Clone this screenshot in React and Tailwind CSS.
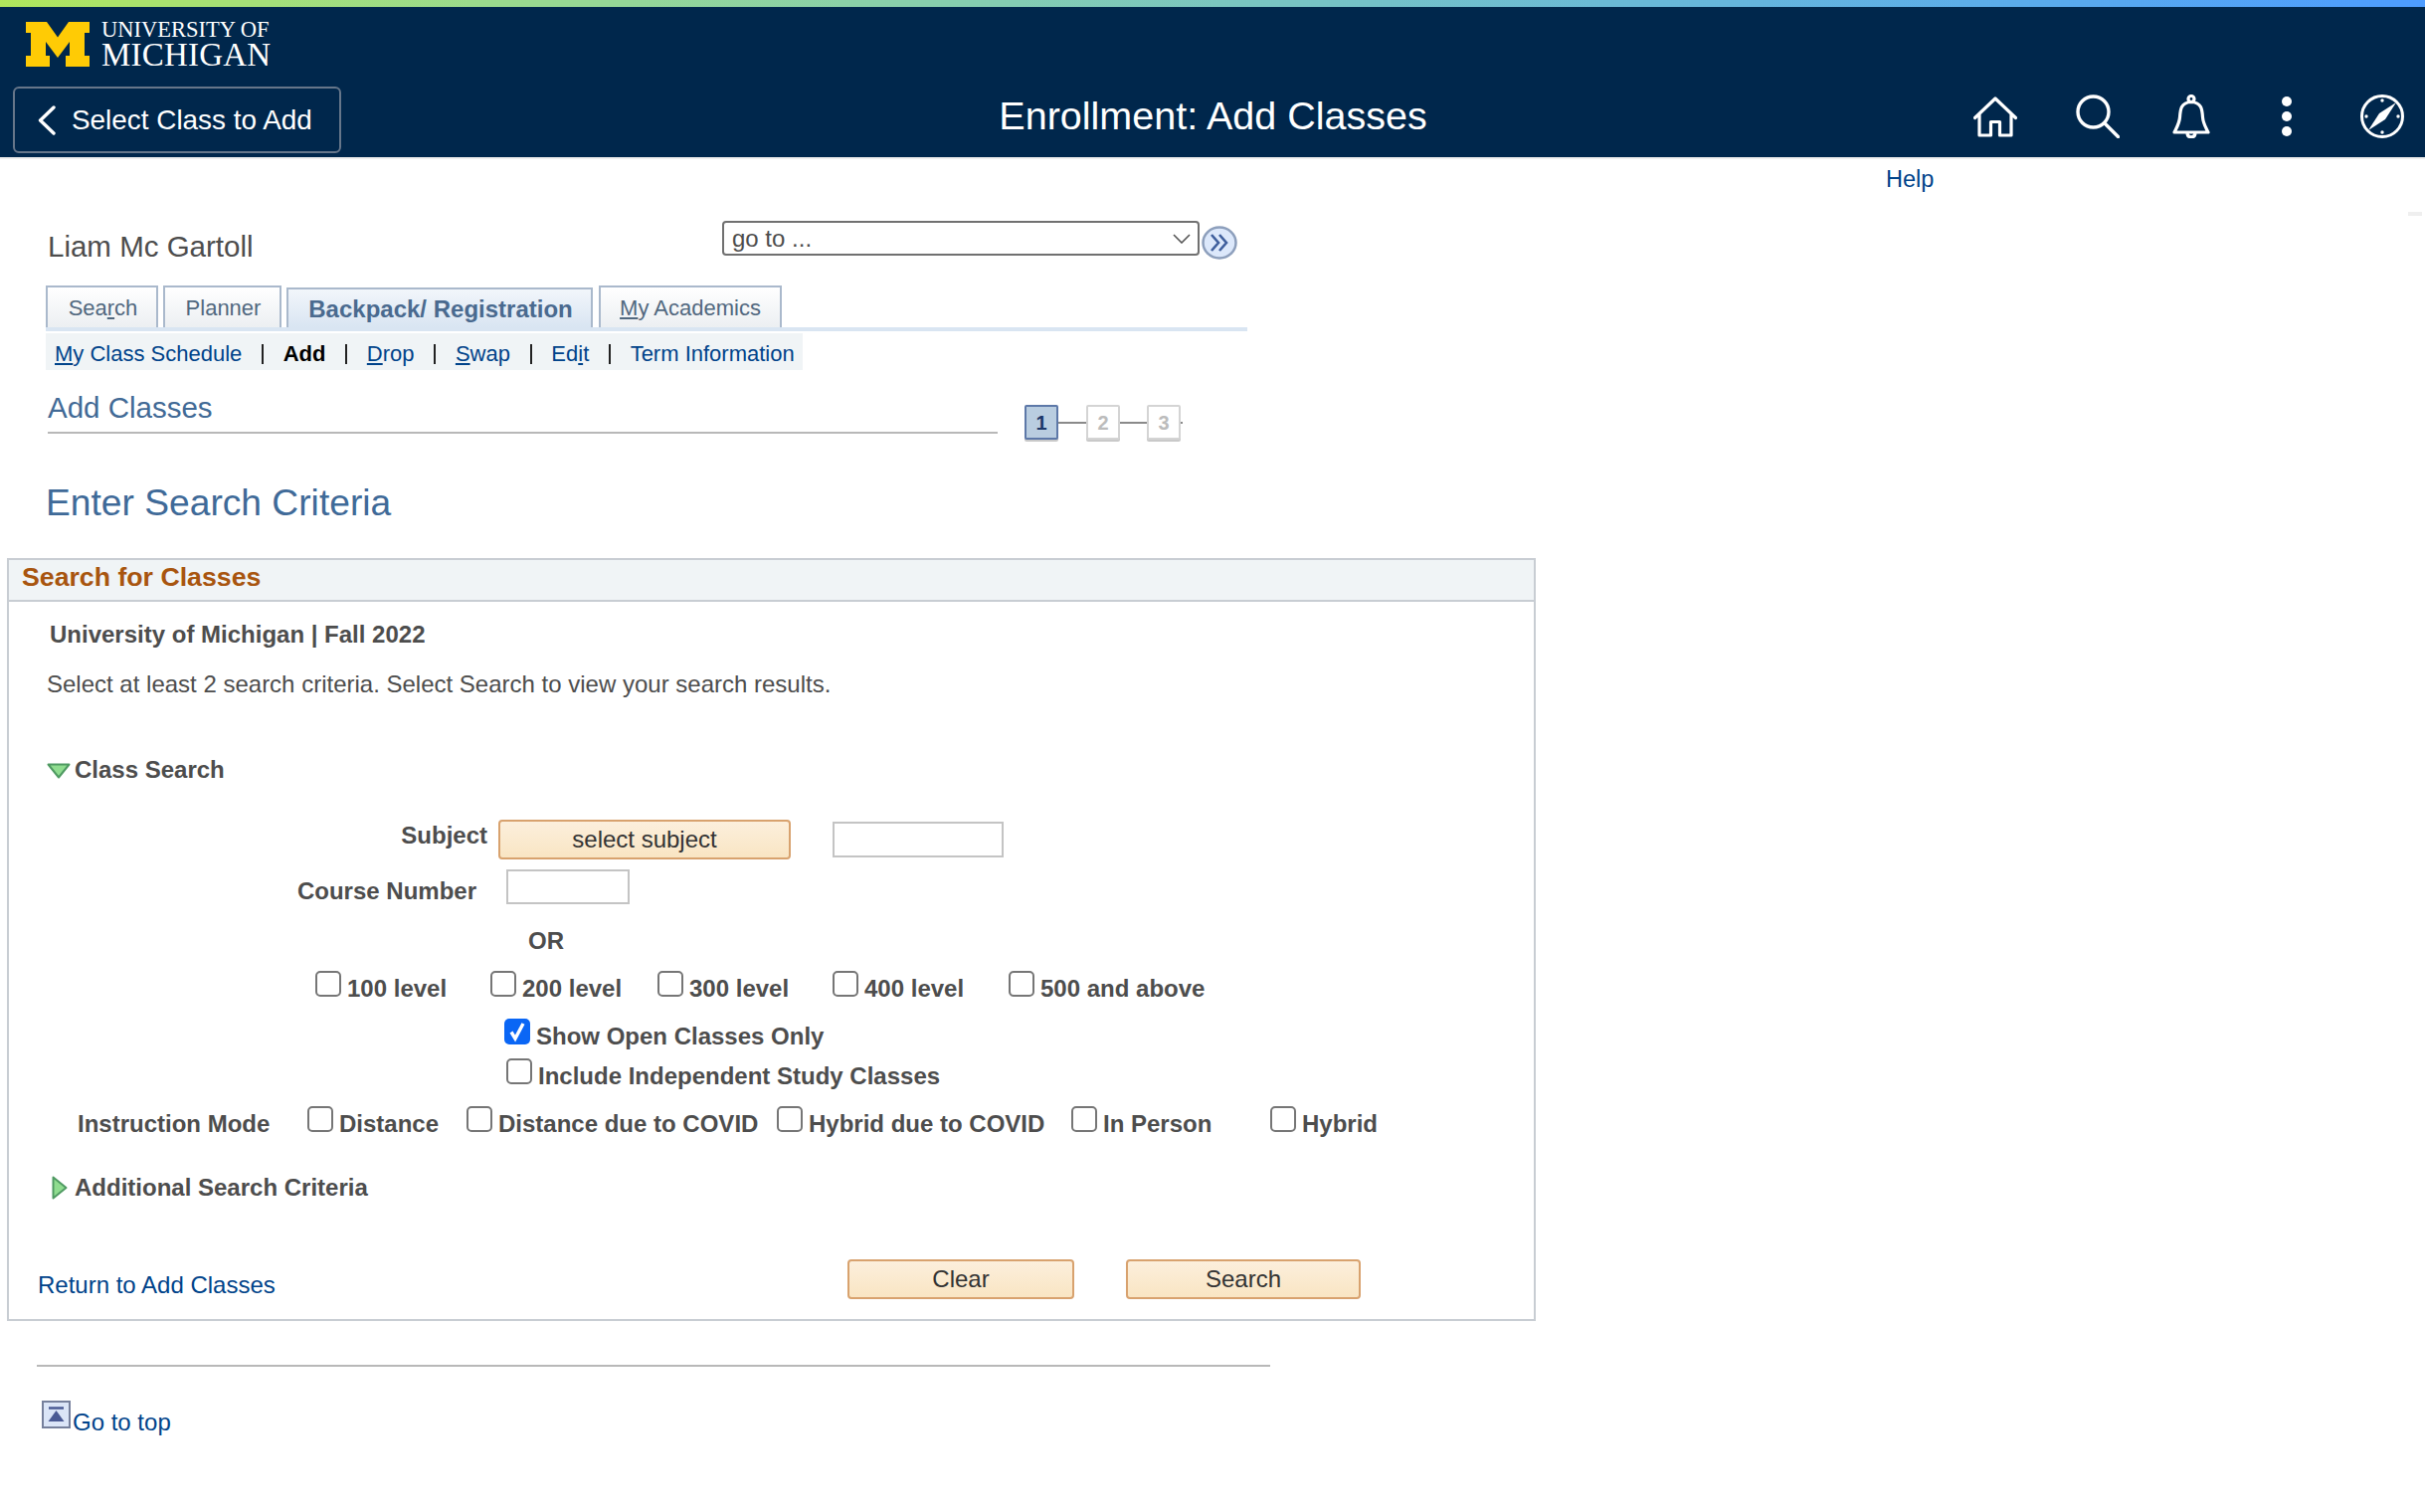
import React from 'react';

const CheckItem = ({ label, checked, className }) => (
    <label className={`flex items-start ${className || ''}`}>
        {checked ? (
            <span className="flex h-[26px] w-[26px] shrink-0 items-center justify-center rounded-[5px] bg-[#0a66f5]">
                <svg viewBox="0 0 26 26" className="h-[26px] w-[26px]" fill="none" stroke="#fff" strokeWidth="3.4">
                    <path d="M7 13.5l4 6.5 8-15" />
                </svg>
            </span>
        ) : (
            <span className="block h-[26px] w-[26px] shrink-0 rounded-[5px] border-2 border-[#767676] bg-white" />
        )}
        <span className="ml-[6px] mt-[3px] whitespace-nowrap text-[24px] font-bold leading-[30px] text-[#4d4d4d]">{label}</span>
    </label>
);

const OrangeButton = ({ children, className }) => (
    <button className={`h-[40px] rounded-[4px] border-2 border-[#d8a26e] bg-gradient-to-b from-[#fcefdc] to-[#f9e5c3] text-[24px] leading-none text-[#333] ${className}`}>
        {children}
    </button>
);

const StepBox = ({ n, active }) => (
    <div className={`flex h-[35px] w-[34px] items-center justify-center rounded-[2px] border-2 text-[20px] font-bold leading-none shadow-[0_2px_0_#c9c9c9] ${active ? 'border-[#5d78a8] bg-[#b9cde0] text-[#1c3768]' : 'border-[#d4d4d4] bg-white text-[#bcbcbc]'}`}>
        {n}
    </div>
);

const Logo = () => (
    <div className="flex items-start">
        <svg viewBox="0 0 64 45" className="h-[45px] w-[64px]">
            <path fill="#ffcb05" d="M0 0h21l11 15.5L43 0h21v11h-5v23h5v11H40V34h4V20L32 36 20 20v14h4v11H0V34h5V11H0z" />
        </svg>
        <div className="ml-[12px] font-['Liberation_Serif',serif] text-white">
            <div className="-mt-[2px] text-[22.5px] leading-[19px]">UNIVERSITY OF</div>
            <div className="mt-[3px] text-[33px] leading-[26px] tracking-[0.2px]">MICHIGAN</div>
        </div>
    </div>
);

const HeaderIcons = () => (
    <div className="flex items-center pr-[21px]">
        <svg viewBox="0 0 44 41" className="h-[41px] w-[44px]" fill="none" stroke="#fff" strokeWidth="3.2" strokeLinecap="round" strokeLinejoin="round">
            <path d="M1.5 21.5L22 2l20.5 19.5M6 18v21h11.5V25.5h9V39H38V18" />
        </svg>
        <svg viewBox="0 0 44 44" className="ml-[59px] h-[44px] w-[44px]" fill="none" stroke="#fff" strokeWidth="3.4" strokeLinecap="round">
            <circle cx="17.5" cy="17.5" r="15.5" />
            <path d="M29 29l13.5 13.5" />
        </svg>
        <svg viewBox="0 0 38 44" className="ml-[53px] h-[44px] w-[38px]" fill="none" stroke="#fff" strokeWidth="3.2" strokeLinejoin="round">
            <circle cx="19" cy="4.5" r="3" />
            <path d="M2 38c3-6 5-9 5.5-15 .5-8 1-15 11.5-15.500C29.500 8 30 15 30.500 23c.5 6 2.500 9 5.500 15z" />
            <path d="M15 39c.5 5 7.500 5 8 0" />
        </svg>
        <div className="ml-[72px] flex flex-col gap-[5px]">
            <div className="h-[10px] w-[10px] rounded-full bg-white" />
            <div className="h-[10px] w-[10px] rounded-full bg-white" />
            <div className="h-[10px] w-[10px] rounded-full bg-white" />
        </div>
        <svg viewBox="0 0 44 44" className="ml-[69px] h-[44px] w-[44px]" fill="none" stroke="#fff" strokeWidth="3">
            <circle cx="22" cy="22" r="20.500" />
            <path fill="#fff" stroke="none" d="M36 8L25 25 8 36l11-17z" />
            <circle cx="22" cy="6" r="1.700" fill="#fff" stroke="none" />
            <circle cx="22" cy="38" r="1.700" fill="#fff" stroke="none" />
            <circle cx="6" cy="22" r="1.700" fill="#fff" stroke="none" />
            <circle cx="38" cy="22" r="1.700" fill="#fff" stroke="none" />
        </svg>
    </div>
);

const App = () => {
    return (
        <div className="h-[1520px] w-[2438px] overflow-hidden bg-white font-['Liberation_Sans',Arial,sans-serif]">
            <div className="h-[7px] bg-gradient-to-r from-[#b0e75c] to-[#4d9cff]" />
            <header className="h-[151px] bg-[#00274c] pt-[15px]">
                <div className="pl-[26px]"><Logo /></div>
                <div className="mt-[19px] grid grid-cols-3 items-center pl-[13px]">
                    <button className="flex h-[67px] w-[330px] items-center rounded-[6px] border-2 border-[#66768a] pl-[23px] text-[27.9px] leading-none text-white">
                        <svg viewBox="0 0 18 30" className="h-[30px] w-[18px]" fill="none" stroke="#fff" strokeWidth="3.4" strokeLinecap="round" strokeLinejoin="round">
                            <path d="M16 2L2.500 15 16 28" />
                        </svg>
                        <span className="ml-[16px]">Select Class to Add</span>
                    </button>
                    <h1 className="-ml-[12px] -mt-[8px] text-center text-[39.500px] font-normal leading-none text-white">Enrollment: Add Classes</h1>
                    <div className="flex justify-end -mt-[7px]"><HeaderIcons /></div>
                </div>
            </header>
            <div className="h-[2px] bg-[#eeeeee]" />

            <div className="flex h-[42px] items-center pl-[1896px]">
                <a className="text-[23.5px] leading-none text-[#00438a]">Help</a>
            </div>

            <div className="flex h-[60px] items-start pl-[48px] pr-[3px] pt-[20px]">
                <div className="mt-[9px] w-[678px] text-[29.5px] leading-[34px] text-[#4d4d4d]">Liam Mc Gartoll</div>
                <div className="flex h-[35px] w-[480px] items-center justify-between rounded-[4px] border-2 border-[#707070] pl-[8px] pr-[7px] text-[24px] leading-none text-[#4d4d4d]">
                    <span>go to ...</span>
                    <svg viewBox="0 0 18 10" className="h-[10px] w-[18px]" fill="none" stroke="#555" strokeWidth="1.6">
                        <path d="M1 1l8 8 8-8" />
                    </svg>
                </div>
                <svg viewBox="0 0 36 34" className="ml-[2px] mt-[5px] h-[34px] w-[36px]" fill="none">
                    <ellipse cx="18" cy="17" rx="16.500" ry="15.500" fill="#dce8fb" stroke="#8d9fbc" strokeWidth="2.500" />
                    <path d="M10 9l7 8-7 8M18 9l7 8-7 8" stroke="#3f5f9d" strokeWidth="2.600" />
                </svg>
                <div className="ml-auto -mt-[9px] h-[4px] w-[14px] bg-[#efefef]" />
            </div>

            <div className="ml-[46px] mt-[25px] flex h-[46px] w-[1208px] items-end border-b-4 border-[#d9e5f2] text-[22px] leading-none text-[#51687f]">
                <div className="flex h-[42px] w-[113px] items-center justify-center border-2 border-b-0 border-[#aab9cc] bg-gradient-to-b from-white to-[#eceff2] pl-[2px] pt-[2px]">Sea<u>r</u>ch</div>
                <div className="ml-[5px] flex h-[42px] w-[119px] items-center justify-center border-2 border-b-0 border-[#aab9cc] bg-gradient-to-b from-white to-[#eceff2] pl-[2px] pt-[2px]">Planner</div>
                <div className="ml-[5px] flex h-[40px] w-[308px] items-center justify-center border-2 border-b-0 border-[#aab9cc] bg-gradient-to-b from-[#f2f6fb] to-[#d9e5f2] pl-[2px] pt-[2px] text-[24px] font-bold text-[#4a6a8f]">Backpack/ Registration</div>
                <div className="ml-[6px] flex h-[42px] w-[184px] items-center justify-center border-2 border-b-0 border-[#aab9cc] bg-gradient-to-b from-white to-[#eceff2] pt-[2px]"><u>M</u>y Academics</div>
            </div>

            <div className="ml-[46px] mt-[2px] flex h-[37px] w-[761px] items-center gap-[19.7px] bg-[#f0f4f6] pl-[9px] pt-[4px] text-[22px] leading-none text-[#00438a]">
                <a><u>M</u>y Class Schedule</a>
                <span className="h-[20px] w-[2px] bg-[#222]" />
                <span className="font-bold text-black">Add</span>
                <span className="h-[20px] w-[2px] bg-[#222]" />
                <a><u>D</u>rop</a>
                <span className="h-[20px] w-[2px] bg-[#222]" />
                <a><u>S</u>wap</a>
                <span className="h-[20px] w-[2px] bg-[#222]" />
                <a>Ed<u>i</u>t</a>
                <span className="h-[20px] w-[2px] bg-[#222]" />
                <a>Term Information</a>
            </div>

            <div className="ml-[48px] mt-[21px] flex h-[49px] items-start">
                <div className="h-[43px] w-[955px] border-b-2 border-[#b8b8b8] text-[29.5px] leading-[34px] text-[#426a96]">Add Classes</div>
                <div className="ml-[27px] mt-[14px] flex items-center">
                    <StepBox n="1" active />
                    <div className="h-[2px] w-[28px] bg-[#8a8a8a]" />
                    <StepBox n="2" />
                    <div className="h-[2px] w-[27px] bg-[#8a8a8a]" />
                    <StepBox n="3" />
                    <div className="h-[2px] w-[2px] bg-[#8a8a8a]" />
                </div>
            </div>

            <h2 className="ml-[46px] mt-[41px] text-[37.2px] font-normal leading-[44px] text-[#3f6a98]">Enter Search Criteria</h2>

            <section className="ml-[7px] mt-[34px] h-[767px] w-[1537px] border-2 border-[#c8cdd3]">
                <div className="flex h-[42px] items-start border-b-2 border-[#c8cdd3] bg-[#f0f4f6] pl-[13px] pt-[1px] text-[26.7px] font-bold leading-[32px] text-[#a8550f]">Search for Classes</div>

                <div className="ml-[41px] mt-[18px] text-[24px] font-bold leading-[30px] text-[#4d4d4d]">University of Michigan | Fall 2022</div>
                <div className="ml-[38px] mt-[20px] text-[24px] leading-[30px] text-[#4d4d4d]">Select at least 2 search criteria. Select Search to view your search results.</div>

                <div className="ml-[38px] mt-[56px] flex items-center text-[24px] font-bold leading-[30px] text-[#4d4d4d]">
                    <svg viewBox="0 0 24 16" className="mt-[2px] h-[16px] w-[24px]">
                        <path d="M1.500 1.500h21L12 14.500z" fill="#8fdc8f" stroke="#4f9a62" strokeWidth="2" strokeLinejoin="round" />
                    </svg>
                    <span className="ml-[4px]">Class Search</span>
                </div>

                <div className="mt-[35px] flex items-start text-[24px] font-bold leading-[30px] text-[#4d4d4d]">
                    <div className="mt-[1px] w-[481px] text-right">Subject</div>
                    <OrangeButton className="ml-[11px] w-[294px] font-normal">select subject</OrangeButton>
                    <div className="ml-[42px] mt-[2px] h-[36px] w-[172px] border-2 border-[#c4c4c4]" />
                </div>

                <div className="mt-[10px] flex items-start text-[24px] font-bold leading-[30px] text-[#4d4d4d]">
                    <div className="mt-[7px] w-[470px] text-right">Course Number</div>
                    <div className="ml-[30px] h-[35px] w-[124px] border-2 border-[#c4c4c4]" />
                </div>

                <div className="ml-[522px] mt-[20px] text-[24px] font-bold leading-[30px] text-[#4d4d4d]">OR</div>

                <div className="ml-[308px] mt-[15px] flex h-[32px]">
                    <CheckItem label="100 level" className="w-[176px]" />
                    <CheckItem label="200 level" className="w-[168px]" />
                    <CheckItem label="300 level" className="w-[176px]" />
                    <CheckItem label="400 level" className="w-[177px]" />
                    <CheckItem label="500 and above" />
                </div>

                <div className="ml-[498px] mt-[16px] h-[33px]">
                    <CheckItem label="Show Open Classes Only" checked />
                </div>
                <div className="ml-[500px] mt-[7px] h-[33px]">
                    <CheckItem label="Include Independent Study Classes" />
                </div>

                <div className="ml-[69px] mt-[15px] flex h-[33px] items-start">
                    <div className="mt-[3px] w-[231px] text-[24px] font-bold leading-[30px] text-[#4d4d4d]">Instruction Mode</div>
                    <CheckItem label="Distance" className="w-[160px]" />
                    <CheckItem label="Distance due to COVID" className="w-[312px]" />
                    <CheckItem label="Hybrid due to COVID" className="w-[296px]" />
                    <CheckItem label="In Person" className="w-[200px]" />
                    <CheckItem label="Hybrid" />
                </div>

                <div className="ml-[43px] mt-[34px] flex items-center text-[24px] font-bold leading-[30px] text-[#4d4d4d]">
                    <svg viewBox="0 0 16 24" className="h-[24px] w-[16px]">
                        <path d="M1.500 1.500L14.500 12 1.500 22.500z" fill="#8fdc8f" stroke="#4f9a62" strokeWidth="2" strokeLinejoin="round" />
                    </svg>
                    <span className="ml-[7px]">Additional Search Criteria</span>
                </div>

                <div className="ml-[29px] mt-[57px] flex items-start">
                    <a className="mt-[11px] w-[814px] text-[24px] leading-[30px] text-[#00438a]">Return to Add Classes</a>
                    <OrangeButton className="w-[228px]">Clear</OrangeButton>
                    <OrangeButton className="ml-[52px] w-[236px]">Search</OrangeButton>
                </div>
            </section>

            <div className="ml-[37px] mt-[44px] h-[2px] w-[1240px] bg-[#b8b8b8]" />

            <div className="ml-[42px] mt-[34px] flex items-start">
                <svg viewBox="0 0 29 28" className="h-[28px] w-[29px]">
                    <rect x="1" y="1" width="27" height="26" fill="#dbe5f7" stroke="#76809c" strokeWidth="2" />
                    <path d="M7 7.500h15" stroke="#4a5a94" strokeWidth="2.500" />
                    <path d="M14.500 10L22.500 21h-16z" fill="#4a5a94" />
                </svg>
                <a className="ml-[2px] mt-[7px] text-[24px] leading-[30px] text-[#00438a]">Go to top</a>
            </div>
        </div>
    );
};

export default App;
